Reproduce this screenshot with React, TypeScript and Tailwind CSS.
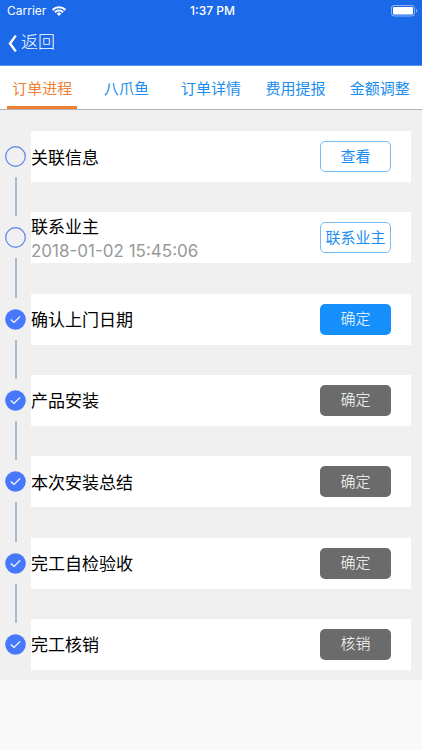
type Variant = "outline" | "primary" | "muted";

interface Step {
  title: string;
  time?: string;
  action: string;
  variant: Variant;
  done: boolean;
}

const tabs = ["订单进程", "八爪鱼", "订单详情", "费用提报", "金额调整"];

const steps: Step[] = [
  { title: "关联信息", action: "查看", variant: "outline", done: false },
  { title: "联系业主", time: "2018-01-02 15:45:06", action: "联系业主", variant: "outline", done: false },
  { title: "确认上门日期", action: "确定", variant: "primary", done: true },
  { title: "产品安装", action: "确定", variant: "muted", done: true },
  { title: "本次安装总结", action: "确定", variant: "muted", done: true },
  { title: "完工自检验收", action: "确定", variant: "muted", done: true },
  { title: "完工核销", action: "核销", variant: "muted", done: true },
];

const buttonStyles: Record<Variant, string> = {
  outline: "border border-[#74bbf8] bg-white text-[#1a8df0]",
  primary: "bg-[#158ffb] font-light text-white",
  muted: "bg-[#6b6b6b] font-light text-white",
};

function WifiIcon() {
  return (
    <svg width="14" height="10" viewBox="0 0 14 10" fill="none" stroke="white" aria-hidden="true">
      <path d="M0.6 3.9a9 9 0 0 1 12.800 0" strokeWidth="2.200" />
      <path d="M2.900 6.300a5.800 5.800 0 0 1 8.200 0" strokeWidth="2" />
      <path d="M7 10 4.700 7.700a3.300 3.300 0 0 1 4.600 0z" fill="white" stroke="none" />
    </svg>
  );
}

function BatteryIcon() {
  return (
    <svg width="27" height="12" viewBox="0 0 27 12" fill="none" aria-hidden="true">
      <rect x="0.5" y="0.5" width="23" height="10.5" rx="2.5" stroke="white" strokeOpacity="0.5" />
      <rect x="2" y="2" width="20" height="7.5" rx="1" fill="white" />
      <path d="M25 4v3.600c.8-.3 1.300-1 1.300-1.800S25.800 4.300 25 4z" fill="white" fillOpacity="0.5" />
    </svg>
  );
}

function StatusBar() {
  return (
    <div className="grid h-[21px] grid-cols-3 items-center pr-1 pl-[7px] text-xs leading-5 text-white">
      <div className="flex items-center gap-1.5">
        <span>Carrier</span>
        <WifiIcon />
      </div>
      <span className="text-center font-medium">1:37 PM</span>
      <div className="flex justify-end">
        <BatteryIcon />
      </div>
    </div>
  );
}

function Marker({ done }: { done: boolean }) {
  return (
    <svg className="shrink-0" width="21" height="21" viewBox="0 0 21 21" fill="none" aria-hidden="true">
      {done ? (
        <>
          <circle cx="10.500" cy="10.500" r="10.300" fill="#4778fc" />
          <path d="M5.800 10.500 9 13.500 15.200 7.400" stroke="white" strokeWidth="1.200" />
        </>
      ) : (
        <circle cx="10.500" cy="10.500" r="9.800" stroke="#5b80ee" strokeWidth="1.200" />
      )}
    </svg>
  );
}

function StepRow({ step, last }: { step: Step; last: boolean }) {
  return (
    <li className={last ? "flex flex-none" : "flex flex-1"}>
      <div className="flex w-[31px] shrink-0 flex-col items-center gap-2.5 pt-[15px]">
        <Marker done={step.done} />
        {!last && <div className="-mb-1 w-px flex-1 border-x border-[#a3bcd2] bg-[#a3bcd2]" />}
      </div>
      <div className="flex h-[51px] flex-1 items-center justify-between bg-white pr-5">
        <div className="pt-0.5">
          <h2 className="text-[17px] leading-6 text-black">{step.title}</h2>
          {step.time && <time className="block text-[17px] leading-6 text-[#999999]">{step.time}</time>}
        </div>
        <button
          type="button"
          className={`h-[31px] w-[71px] rounded-[5px] text-[15px] leading-5 ${buttonStyles[step.variant]}`}
        >
          {step.action}
        </button>
      </div>
    </li>
  );
}

export default function App() {
  return (
    <div className="min-h-screen bg-[#f9f9f9] font-['Inter','Noto_Sans_CJK_SC',sans-serif]">
      <header className="border-b border-[#5b93ee] bg-[#1b69e8]">
        <StatusBar />
        <button type="button" className="flex h-11 items-center gap-1 pl-2 text-[17px] font-light text-white">
          <svg width="9" height="17" viewBox="0 0 9 17" fill="none" stroke="white" strokeWidth="2.400" aria-hidden="true">
            <path d="M7.800 0.600 2 8.500l5.800 7.900" />
          </svg>
          返回
        </button>
      </header>
      <nav className="grid h-11 grid-cols-5 border-b border-[#b2b2b2] bg-white">
        {tabs.map((tab, i) => (
          <a
            key={tab}
            href="#"
            aria-current={i === 0 ? "page" : undefined}
            className={`mx-[7px] flex items-center justify-center border-b-3 pt-1.5 text-[15px] whitespace-nowrap ${
              i === 0 ? "border-[#ef8234] text-[#ef8234]" : "border-transparent text-[#1a8df0]"
            }`}
          >
            {tab}
          </a>
        ))}
      </nav>
      <main className="bg-[#f0f0f0] pt-[21px] pr-[11px] pb-2.5">
        <ol className="flex min-h-[539px] flex-col">
          {steps.map((step, i) => (
            <StepRow key={step.title} step={step} last={i === steps.length - 1} />
          ))}
        </ol>
      </main>
    </div>
  );
}
